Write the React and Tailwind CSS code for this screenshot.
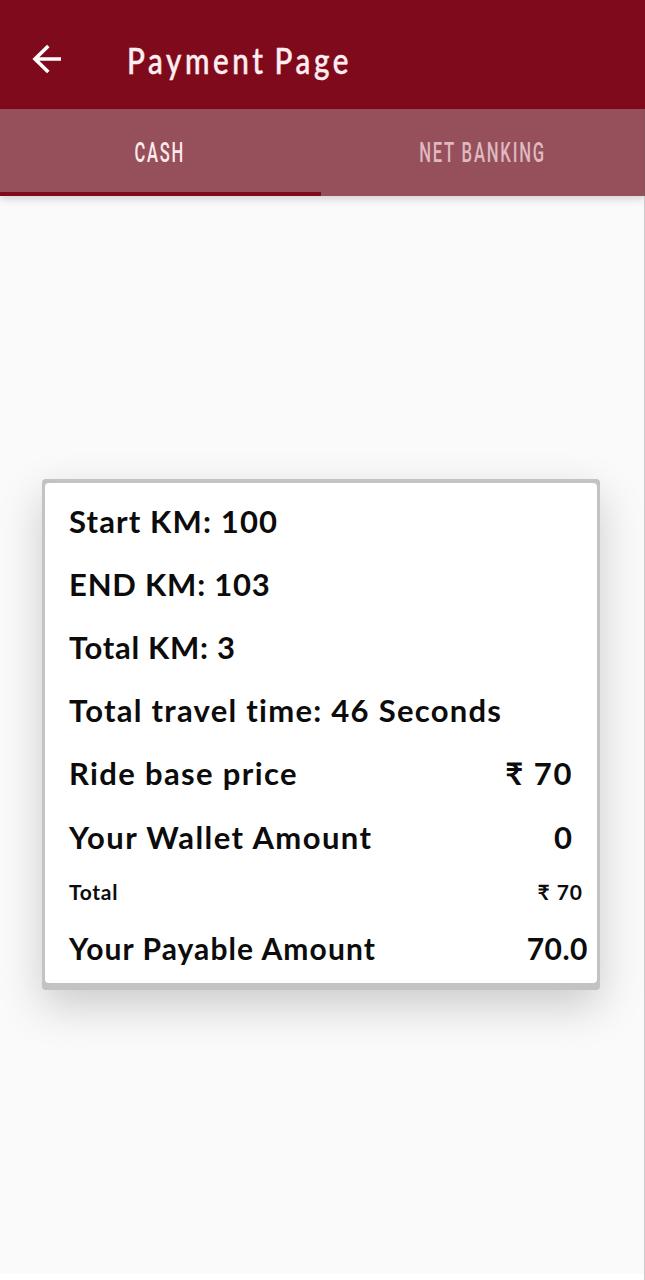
const trip = [
  { label: "Start KM: 100", style: "tracking-[1.15px]" },
  { label: "END KM: 103", style: "tracking-[0.8px]" },
  { label: "Total KM: 3", style: "tracking-[0.7px]" },
  { label: "Total travel time: 46 Seconds", style: "tracking-[1.27px]" },
];

function Header() {
  return (
    <header className="flex h-[109px] items-center bg-[#7f0a1c] pt-3 text-[#ffeef1]">
      <button className="ml-[27px] mr-[60px] -mt-1" aria-label="Back">
        <svg width="40" height="40" viewBox="0 0 40 40" fill="none" stroke="#fff" strokeWidth="3.6">
          <path d="M34 20H8M21.3 7L8 20L21.3 33" />
        </svg>
      </button>
      <h1 className="-mt-0.5 origin-left scale-x-[0.8] whitespace-nowrap font-[Lato,sans-serif] text-[37px] font-medium leading-none tracking-[4.5px] [-webkit-text-stroke:0.5px_#ffeef1] [word-spacing:-4px]">
        Payment Page
      </h1>
    </header>
  );
}

function Tabs() {
  return (
    <nav className="flex h-[87px] bg-[#95505b] font-[Roboto,sans-serif] text-[28px] font-medium leading-none shadow-[0_3px_8px_rgba(0,0,0,0.16)]">
      <button className="flex w-[321px] items-center justify-center border-b-4 border-[#7f0a1c] pr-0.5 pt-1 text-[#ffe9ed]">
        <span className="scale-x-[0.59] tracking-[3px]">CASH</span>
      </button>
      <button className="flex flex-1 items-center justify-center border-b-4 border-r border-b-transparent border-r-[#85535c] pt-1 text-[#dfb9c0]">
        <span className="scale-x-[0.595] whitespace-nowrap tracking-[3px]">NET BANKING</span>
      </button>
    </nav>
  );
}

export default function App() {
  return (
    <div className="flex h-[1280px] flex-col bg-[#fafafa]">
      <Header />
      <Tabs />
      <main className="flex flex-1 flex-col justify-between border-r border-[#cbcbcb] pt-[283px]">
        <div className="ml-[42px] w-[558px] rounded-[4px] bg-[#c3c3c3] px-[3px] pb-[7px] pt-1 shadow-[0_16px_44px_rgba(0,0,0,0.19)]">
          <div className="h-[500px] rounded-[4px] bg-white pl-6 pt-[7px] font-[Lato,sans-serif] text-[31px] font-bold text-[#0c0c0c]">
            {trip.map((item) => (
              <div key={item.label} className="flex h-[63px] items-center">
                <span className={item.style}>{item.label}</span>
              </div>
            ))}
            <div className="flex h-[63px] items-center justify-between pr-6">
              <span className="tracking-[1.35px]">Ride base price</span>
              <span className="tracking-[1.6px]">₹ 70</span>
            </div>
            <div className="flex h-[64px] items-center justify-between pr-[25px]">
              <span className="tracking-[1.42px]">Your Wallet Amount</span>
              <span>0</span>
            </div>
            <div className="flex h-[46px] items-center justify-between pr-[14px] text-[21px]">
              <span className="tracking-[0.7px]">Total</span>
              <span className="tracking-[1px]">₹ 70</span>
            </div>
            <div className="flex h-[66px] items-center justify-between pr-[9px] text-[30px]">
              <span className="tracking-[1.08px]">Your Payable Amount</span>
              <span className="tracking-[0.5px]">70.0</span>
            </div>
          </div>
        </div>
        <div className="h-1.5 bg-white" />
      </main>
    </div>
  );
}
